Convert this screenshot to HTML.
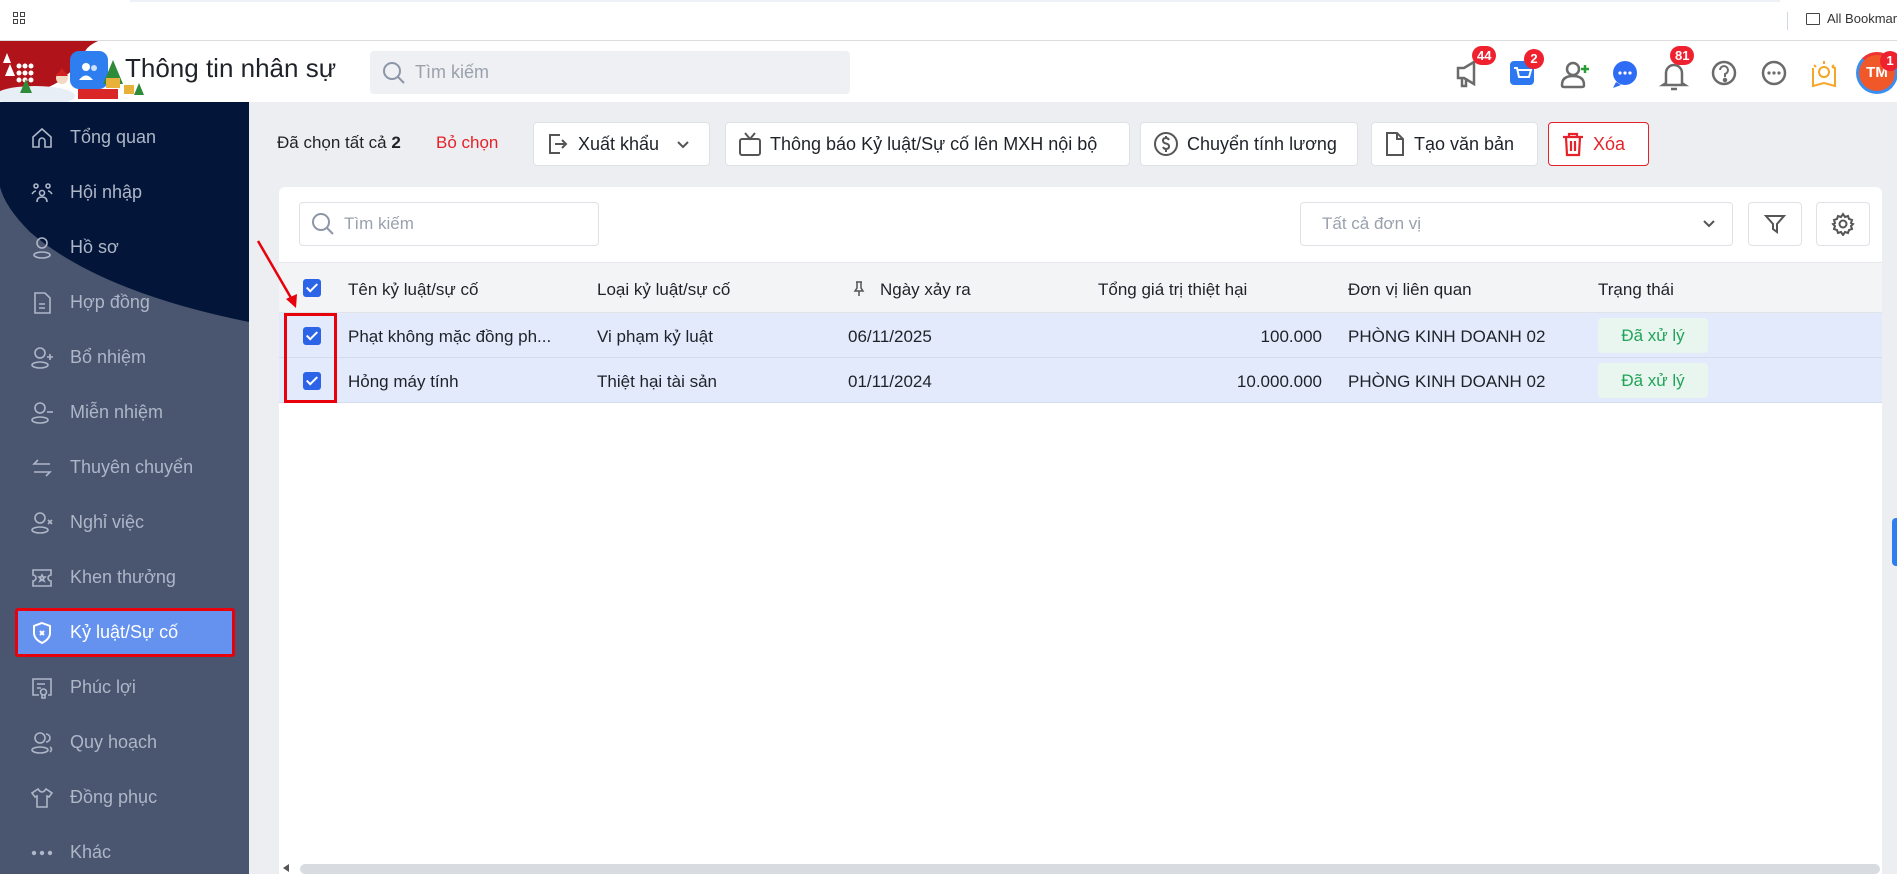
<!DOCTYPE html>
<html><head><meta charset="utf-8"><style>
*{box-sizing:border-box;margin:0;padding:0}
body{width:1897px;height:874px;overflow:hidden;background:#eceef1;font-family:"Liberation Sans","Noto Sans CJK SC",sans-serif;position:relative;color:#1f2329}
.abs{position:absolute}
.topbar{left:0;top:0;width:1897px;height:41px;background:#fff;border-bottom:1px solid #dcdcdc}
.header{left:0;top:41px;width:1897px;height:61px;background:#fff}
.side{left:0;top:102px;width:249px;height:772px;background:#4a5570;overflow:hidden}
.nav{position:absolute;left:70px;font-size:18px;color:#aeb6c7;white-space:nowrap}
.ico{position:absolute;left:30px;width:24px;height:24px}
.btn{position:absolute;top:122px;height:44px;background:#fff;border:1px solid #dfe1e6;border-radius:4px;font-size:18px;display:flex;align-items:center;padding-left:12px;gap:8px;color:#1f2329}
.card{left:279px;top:187px;width:1603px;height:687px;background:#fff;border-radius:6px 6px 0 0}
.th{position:absolute;top:280px;font-size:17px;color:#1f2329}
.td{position:absolute;font-size:17px;color:#1f2329;white-space:nowrap}
.cb{position:absolute;left:303px;width:18px;height:18px;background:#2b64e6;border-radius:3px}
.cb:after{content:"";position:absolute;left:6px;top:2px;width:4px;height:9px;border:solid #fff;border-width:0 2px 2px 0;transform:rotate(45deg)}
.badge{position:absolute;background:#f0212f;color:#fff;font-size:13px;font-weight:bold;border-radius:10px;height:19px;line-height:19px;text-align:center;padding:0 5px}
.st{position:absolute;left:1598px;width:110px;height:35px;background:#e8f6ef;color:#22a35a;font-size:17px;border-radius:4px;text-align:center;line-height:35px}
</style></head><body>
<div class="abs topbar"></div>
<div class="abs" style="left:13px;top:12px;width:13px;height:13px">
<div class="abs" style="left:0;top:0;width:5px;height:5px;border:1px solid #444"></div><div class="abs" style="left:7px;top:0;width:5px;height:5px;border:1px solid #444"></div><div class="abs" style="left:0;top:7px;width:5px;height:5px;border:1px solid #444"></div><div class="abs" style="left:7px;top:7px;width:5px;height:5px;border:1px solid #444"></div></div>
<div class="abs" style="left:130px;top:0;width:1650px;height:2px;background:#eef2f8"></div>
<div class="abs" style="left:1787px;top:12px;width:1px;height:18px;background:#cfd8e8"></div>
<div class="abs" style="left:1806px;top:13px;width:14px;height:12px;border:1.5px solid #444;border-radius:1px"></div>
<div class="abs" style="left:1827px;top:11px;font-size:13px;color:#333;white-space:nowrap">All Bookmarks</div>

<div class="abs header"></div>
<svg class="abs" style="left:0;top:41px" width="180" height="62"><path d="M0 0H98Q80 8 84 22Q70 30 60 40Q30 58 0 55Z" fill="#b01319"/><ellipse cx="35" cy="55" rx="40" ry="10" fill="#e8eef6"/><path d="M3 22l4-10 4 10z M5 35l5-12 5 12z" fill="#fff"/><g fill="#fff"><circle cx="19" cy="25" r="2.5"/><circle cx="25" cy="25" r="2.5"/><circle cx="31" cy="25" r="2.5"/><circle cx="19" cy="32" r="2.5"/><circle cx="25" cy="32" r="2.5"/><circle cx="31" cy="32" r="2.5"/><circle cx="19" cy="39" r="2.5"/><circle cx="25" cy="39" r="2.5"/><circle cx="31" cy="39" r="2.5"/></g><path d="M20 52l6-14 6 14z" fill="#2e8b3a"/><circle cx="62" cy="37" r="6" fill="#f3d9c4"/><path d="M56 35l6-8 6 8z" fill="#d02020"/><rect x="70" y="10" width="38" height="38" rx="9" fill="#2f7ef0"/><circle cx="86" cy="26" r="4" fill="#fff"/><circle cx="94" cy="27" r="3" fill="#cfe0ff"/><path d="M79 39q7-9 14 0z" fill="#fff"/><path d="M103 43l10-24 10 24z" fill="#2e8b3a"/><rect x="78" y="48" width="40" height="10" fill="#d92626"/><rect x="106" y="37" width="14" height="10" fill="#e8b23a"/><rect x="124" y="44" width="10" height="9" fill="#e8b23a"/><path d="M134 54l5-12 5 12z" fill="#2e8b3a"/></svg>
<div class="abs" style="left:125px;top:53px;font-size:26px;color:#1f2329">Thông tin nhân sự</div>
<div class="abs" style="left:370px;top:51px;width:480px;height:43px;background:#eef0f3;border-radius:4px"></div>
<svg class="abs" style="left:382px;top:61px" width="24" height="24"><circle cx="10" cy="10" r="8" fill="none" stroke="#8d96a7" stroke-width="2"/><path d="M16 16l6 6" stroke="#8d96a7" stroke-width="2"/></svg>
<div class="abs" style="left:415px;top:62px;font-size:18px;color:#9aa1ad">Tìm kiếm</div>

<svg class="abs" style="left:1450px;top:58px" width="440" height="40" fill="none" stroke="#6b6b6b" stroke-width="2.5">
<path d="M8 10h6l10-6v22l-10-6H8z M12 20v8h4v-8"/>
<rect x="60" y="3" width="24" height="24" rx="4" fill="#2d78f0" stroke="none"/><path d="M64 10h3l2 9h10l2-7h-13" stroke="#fff" stroke-width="2"/>
<circle cx="123" cy="11" r="6"/><path d="M112 27q0-9 11-9t11 9q0 2-2 2h-18q-2 0-2-2z"/><path d="M135 7v8M131 11h8" stroke="#26a035" stroke-width="2.5"/>
<circle cx="175" cy="15" r="12" fill="#2e6cf5" stroke="none"/><path d="M166 24l-3 6 8-3z" fill="#2e6cf5" stroke="none"/><g fill="#fff" stroke="none"><circle cx="170" cy="15" r="1.6"/><circle cx="175" cy="15" r="1.6"/><circle cx="180" cy="15" r="1.6"/></g>
<path d="M216 25v-10a8 8 0 0 1 16 0v10l3 2h-22z M221 31h6"/>
<circle cx="274" cy="15" r="11"/><path d="M270 12a4 4 0 1 1 5 4v3" stroke-width="2"/><circle cx="275" cy="22" r="1" fill="#6b6b6b"/>
<circle cx="324" cy="15" r="11"/><g fill="#6b6b6b" stroke="none"><circle cx="319" cy="15" r="1.6"/><circle cx="324" cy="15" r="1.6"/><circle cx="329" cy="15" r="1.6"/></g>
<path d="M363 10v18l11-3 11 3v-18l-3-1" stroke="#f5a623" stroke-width="2"/><circle cx="374" cy="14" r="5" stroke="#f5a623" stroke-width="2"/><path d="M374 3v3M364 7l2 2M384 7l-2 2" stroke="#f5a623" stroke-width="2"/>
</svg>
<div class="abs" style="left:1856px;top:52px;width:42px;height:42px;border-radius:50%;border:3px solid #3a8ef0;border-top-color:#e33;background:#f0582a;color:#fff;font-size:15px;font-weight:bold;text-align:center;line-height:36px">TM</div>
<div class="badge" style="left:1472px;top:46px">44</div>
<div class="badge" style="left:1524px;top:49px;border-radius:50%;width:20px;height:20px;padding:0">2</div>
<div class="badge" style="left:1670px;top:46px">81</div>
<div class="badge" style="left:1880px;top:51px;border-radius:50%;width:20px;height:20px;padding:0">1</div>

<div class="abs side">
<svg class="abs" style="left:0;top:0" width="249" height="250"><path d="M0 0H249V220Q100 190 30 130Q5 105 0 85Z" fill="#03163a"/></svg>
</div>
<div class="abs" style="left:0;top:102px;width:249px;height:772px">
<svg class="ico" style="top:24px" viewBox="0 0 24 24" fill="none" stroke="#aeb6c7" stroke-width="1.6"><path d="M3 11l9-8 9 8v10h-6v-6a3 3 0 0 0-6 0v6H3z"/></svg><div class="nav" style="top:25px">Tổng quan</div>
<svg class="ico" style="top:79px" viewBox="0 0 24 24" fill="none" stroke="#aeb6c7" stroke-width="1.6"><circle cx="6" cy="5" r="2"/><circle cx="18" cy="5" r="2"/><circle cx="12" cy="12" r="2.5"/><path d="M2 13q2-3 4-3M22 13q-2-3-4-3M7 21q0-5 5-5t5 5"/></svg><div class="nav" style="top:80px">Hội nhập</div>
<svg class="ico" style="top:134px" viewBox="0 0 24 24" fill="none" stroke="#aeb6c7" stroke-width="1.6"><circle cx="12" cy="7" r="5"/><ellipse cx="12" cy="19" rx="8" ry="3"/></svg><div class="nav" style="top:135px">Hồ sơ</div>
<svg class="ico" style="top:189px" viewBox="0 0 24 24" fill="none" stroke="#aeb6c7" stroke-width="1.6"><path d="M5 2h10l5 5v15H5z M9 13h6M9 17h6"/></svg><div class="nav" style="top:190px">Hợp đồng</div>
<svg class="ico" style="top:244px" viewBox="0 0 24 24" fill="none" stroke="#aeb6c7" stroke-width="1.6"><circle cx="10" cy="7" r="5"/><ellipse cx="10" cy="19" rx="8" ry="3"/><path d="M20 8v6M17 11h6"/></svg><div class="nav" style="top:245px">Bổ nhiệm</div>
<svg class="ico" style="top:299px" viewBox="0 0 24 24" fill="none" stroke="#aeb6c7" stroke-width="1.6"><circle cx="10" cy="7" r="5"/><ellipse cx="10" cy="19" rx="8" ry="3"/><path d="M17 11h6"/></svg><div class="nav" style="top:300px">Miễn nhiệm</div>
<svg class="ico" style="top:354px" viewBox="0 0 24 24" fill="none" stroke="#aeb6c7" stroke-width="1.6"><path d="M20 8H4l4-4M4 16h16l-4 4"/></svg><div class="nav" style="top:355px">Thuyên chuyển</div>
<svg class="ico" style="top:409px" viewBox="0 0 24 24" fill="none" stroke="#aeb6c7" stroke-width="1.6"><circle cx="10" cy="7" r="5"/><ellipse cx="10" cy="19" rx="8" ry="3"/><path d="M18 9l4 4M22 9l-4 4"/></svg><div class="nav" style="top:410px">Nghỉ việc</div>
<svg class="ico" style="top:464px" viewBox="0 0 24 24" fill="none" stroke="#aeb6c7" stroke-width="1.6"><path d="M3 4h18v5a3 3 0 0 0 0 6v5H3v-5a3 3 0 0 0 0-6z M12 9l1 2h2l-2 2 1 2-2-1-2 1 1-2-2-2h2z"/></svg><div class="nav" style="top:465px">Khen thưởng</div>
<div class="abs" style="left:15px;top:506px;width:220px;height:49px;border:3px solid #e8000b;border-radius:3px;background:#6492ee"></div>
<svg class="ico" style="top:519px" viewBox="0 0 24 24" fill="none" stroke="#fff" stroke-width="2"><path d="M12 2l8 3v7q0 6-8 10q-8-4-8-10V5z M10 10l4 4M14 10l-4 4"/></svg><div class="nav" style="top:520px;color:#fff">Kỷ luật/Sự cố</div>
<svg class="ico" style="top:574px" viewBox="0 0 24 24" fill="none" stroke="#aeb6c7" stroke-width="1.6"><path d="M9 19H3V3h18v16h-3M7 8h8M7 12h4"/><circle cx="13.5" cy="16" r="3"/><path d="M12 19v3h3v-3"/></svg><div class="nav" style="top:575px">Phúc lợi</div>
<svg class="ico" style="top:629px" viewBox="0 0 24 24" fill="none" stroke="#aeb6c7" stroke-width="1.6"><circle cx="10" cy="7" r="5"/><ellipse cx="10" cy="19" rx="8" ry="3"/><path d="M16 3a4 4 0 0 1 0 8M20 16q3 2 0 5"/></svg><div class="nav" style="top:630px">Quy hoạch</div>
<svg class="ico" style="top:684px" viewBox="0 0 24 24" fill="none" stroke="#aeb6c7" stroke-width="1.6"><path d="M8 3l-6 4 3 4 2-1v11h10V10l2 1 3-4-6-4q-2 3-4 3t-4-3z"/></svg><div class="nav" style="top:685px">Đồng phục</div>
<svg class="ico" style="top:739px" viewBox="0 0 24 24" fill="#aeb6c7"><circle cx="4" cy="12" r="2.2"/><circle cx="12" cy="12" r="2.2"/><circle cx="20" cy="12" r="2.2"/></svg><div class="nav" style="top:740px">Khác</div>
</div>

<div class="abs" style="left:277px;top:133px;font-size:17px">Đã chọn tất cả <b>2</b></div>
<div class="abs" style="left:436px;top:133px;font-size:17px;color:#e5222a">Bỏ chọn</div>
<div class="btn" style="left:533px;width:177px"><svg width="24" height="24" fill="none" stroke="#555" stroke-width="2"><path d="M14 3H4v18h10M9 12h11M16 8l4 4-4 4"/></svg>Xuất khẩu<svg width="16" height="16" style="margin-left:8px" fill="none" stroke="#555" stroke-width="2"><path d="M3 6l5 5 5-5"/></svg></div>
<div class="btn" style="left:725px;width:405px"><svg width="24" height="26" fill="none" stroke="#555" stroke-width="2"><rect x="2" y="8" width="20" height="16" rx="2"/><path d="M7 2l5 6 5-6"/></svg>Thông báo Kỷ luật/Sự cố lên MXH nội bộ</div>
<div class="btn" style="left:1140px;width:218px"><svg width="26" height="26" fill="none" stroke="#555" stroke-width="2"><circle cx="13" cy="13" r="11"/><path d="M16 9q-1-2-3-2-3 0-3 2.5t3 3 3 3-3 2.5q-2 0-3-2M13 5v2M13 19v2"/></svg>Chuyển tính lương</div>
<div class="btn" style="left:1371px;width:167px"><svg width="22" height="26" fill="none" stroke="#555" stroke-width="2"><path d="M3 2h10l6 6v16H3z M13 2v6h6"/></svg>Tạo văn bản</div>
<div class="btn" style="left:1548px;width:101px;border-color:#e5222a;color:#e5222a"><svg width="24" height="26" fill="none" stroke="#e5222a" stroke-width="2.2"><path d="M2 6h20M8 6V3h8v3M5 6l1 18h12l1-18M10 10v10M14 10v10"/></svg>Xóa</div>

<div class="abs card"></div>
<div class="abs" style="left:299px;top:202px;width:300px;height:44px;border:1px solid #dfe1e6;border-radius:4px"></div>
<svg class="abs" style="left:311px;top:212px" width="24" height="24"><circle cx="10" cy="10" r="8" fill="none" stroke="#8d96a7" stroke-width="2"/><path d="M16 16l6 6" stroke="#8d96a7" stroke-width="2"/></svg>
<div class="abs" style="left:344px;top:214px;font-size:17px;color:#9aa1ad">Tìm kiếm</div>
<div class="abs" style="left:1300px;top:202px;width:433px;height:44px;border:1px solid #dfe1e6;border-radius:4px"></div>
<div class="abs" style="left:1322px;top:214px;font-size:17px;color:#9aa1ad">Tất cả đơn vị</div>
<svg class="abs" style="left:1702px;top:217px" width="14" height="14" fill="none" stroke="#555" stroke-width="2"><path d="M2 4l5 5 5-5"/></svg>
<div class="abs" style="left:1748px;top:202px;width:54px;height:44px;border:1px solid #dfe1e6;border-radius:4px"></div>
<svg class="abs" style="left:1763px;top:212px" width="24" height="24" fill="none" stroke="#555" stroke-width="2"><path d="M3 4h18l-7 8v8l-4-3v-5z"/></svg>
<div class="abs" style="left:1816px;top:202px;width:54px;height:44px;border:1px solid #dfe1e6;border-radius:4px"></div>
<svg class="abs" style="left:1831px;top:212px" width="24" height="24" fill="none" stroke="#555" stroke-width="2"><circle cx="12" cy="12" r="3.5"/><path d="M12 2l2 3 3-1 1 3 3 1-1 3 2 1-2 2 1 3-3 1-1 3-3-1-2 3-2-3-3 1-1-3-3-1 1-3-2-2 2-1-1-3 3-1 1-3 3 1z"/></svg>

<div class="abs" style="left:279px;top:262px;width:1603px;height:51px;background:#f3f4f6;border-top:1px solid #e5e7eb;border-bottom:1px solid #e0e3e8"></div>
<div class="cb" style="top:279px"></div>
<div class="th" style="left:348px">Tên kỷ luật/sự cố</div>
<div class="th" style="left:597px">Loại kỷ luật/sự cố</div>
<svg class="abs" style="left:853px;top:281px" width="12" height="16" fill="none" stroke="#555" stroke-width="1.5"><path d="M3 1h6M4 1v6l-2 3h8l-2-3V1M6 10v5"/></svg>
<div class="th" style="left:880px">Ngày xảy ra</div>
<div class="th" style="left:1098px">Tổng giá trị thiệt hại</div>
<div class="th" style="left:1348px">Đơn vị liên quan</div>
<div class="th" style="left:1598px">Trạng thái</div>

<div class="abs" style="left:279px;top:313px;width:1603px;height:45px;background:#e2eafc;border-bottom:1px solid #d3dcec"></div>
<div class="abs" style="left:279px;top:358px;width:1603px;height:45px;background:#e2eafc;border-bottom:1px solid #d3dcec"></div>
<div class="cb" style="top:327px"></div>
<div class="cb" style="top:372px"></div>
<div class="td" style="left:348px;top:327px">Phạt không mặc đồng ph...</div>
<div class="td" style="left:597px;top:327px">Vi phạm kỷ luật</div>
<div class="td" style="left:848px;top:327px">06/11/2025</div>
<div class="td" style="left:1000px;top:327px;width:322px;text-align:right">100.000</div>
<div class="td" style="left:1348px;top:327px">PHÒNG KINH DOANH 02</div>
<div class="st" style="top:318px">Đã xử lý</div>
<div class="td" style="left:348px;top:372px">Hỏng máy tính</div>
<div class="td" style="left:597px;top:372px">Thiệt hại tài sản</div>
<div class="td" style="left:848px;top:372px">01/11/2024</div>
<div class="td" style="left:1000px;top:372px;width:322px;text-align:right">10.000.000</div>
<div class="td" style="left:1348px;top:372px">PHÒNG KINH DOANH 02</div>
<div class="st" style="top:363px">Đã xử lý</div>

<div class="abs" style="left:284px;top:313px;width:53px;height:90px;border:3px solid #e8000b"></div>
<svg class="abs" style="left:250px;top:235px" width="60" height="80"><path d="M8 6L44 68" stroke="#e8000b" stroke-width="2.5"/><path d="M36 64l10 9 1-14z" fill="#e8000b"/></svg>

<div class="abs" style="left:283px;top:864px;width:0;height:8px;border-right:6px solid #555;border-top:4px solid transparent;border-bottom:4px solid transparent"></div>
<div class="abs" style="left:300px;top:864px;width:1580px;height:10px;background:#d8dbe0;border-radius:5px"></div>
<div class="abs" style="left:1892px;top:518px;width:5px;height:48px;background:#2f7ef0;border-radius:4px 0 0 4px"></div>
</body></html>
